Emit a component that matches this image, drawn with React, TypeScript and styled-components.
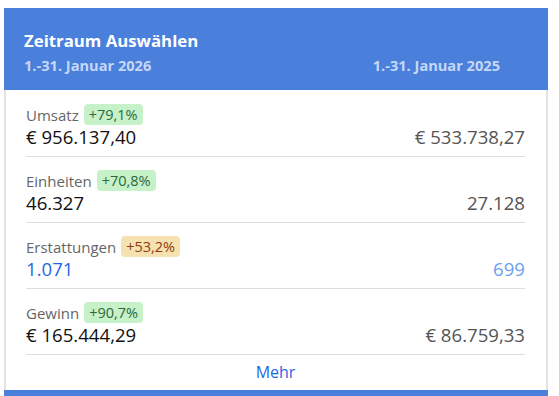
import React from "react";
import styled, { createGlobalStyle } from "styled-components";

const Global = createGlobalStyle`
  html, body { margin: 0; padding: 0; background: #ffffff; }
  body { font-family: "Open Sans", "Noto Sans", sans-serif; }
`;

const Card = styled.div`
  width: 544px;
  margin: 8px 0 0 4px;
  background: #fff;
`;

const Header = styled.div`
  background: #4a7fdc;
  height: 82px;
  box-sizing: border-box;
  padding: 21px 48px 0 20px;
`;

const Title = styled.div`
  color: #fff;
  font-weight: 700;
  font-size: 16.8px;
  line-height: 24px;
`;

const DateRow = styled.div`
  display: flex;
  justify-content: space-between;
  color: #c4d8f6;
  font-weight: 700;
  font-size: 14.6px;
  line-height: 20px;
  margin-top: 2px;
`;

const Body = styled.div`
  border-left: 2px solid #e2e2e2;
  border-right: 2px solid #e2e2e2;
  padding: 1px 21px 0 20px;
`;

const Row = styled.div`
  padding: 13px 0 7px;
  border-bottom: 1px solid #dedede;
`;

const LabelLine = styled.div`
  display: flex;
  align-items: center;
  gap: 5px;
  height: 21px;
`;

const Label = styled.span`
  color: #666;
  font-size: 15px;
`;

const Badge = styled.span<{ $tone: "up" | "warn" }>`
  display: inline-flex;
  align-items: center;
  height: 21px;
  padding: 0 5px;
  border-radius: 4px;
  font-size: 14.5px;
  background: ${(p) => (p.$tone === "up" ? "#c6f1c9" : "#f6e1b0")};
  color: ${(p) => (p.$tone === "up" ? "#2c6a3b" : "#8b3b0f")};
`;

const ValueLine = styled.div`
  display: flex;
  justify-content: space-between;
  font-size: 18.6px;
  line-height: 24px;
`;

const Current = styled.span<{ $blue?: boolean }>`
  color: ${(p) => (p.$blue ? "#1f68e3" : "#111")};
`;

const Previous = styled.span<{ $blue?: boolean }>`
  color: ${(p) => (p.$blue ? "#6b9ff0" : "#555")};
`;

const More = styled.div`
  text-align: center;
  padding: 7px 0 7px;
  font-size: 16px;
  line-height: 21px;
  color: #1f68e3;
`;

const BottomBar = styled.div`
  height: 10px;
  background: #4a7fdc;
`;

type Metric = {
  label: string;
  change: string;
  tone: "up" | "warn";
  current: string;
  previous: string;
  blue?: boolean;
};

const metrics: Metric[] = [
  { label: "Umsatz", change: "+79,1%", tone: "up", current: "€ 956.137,40", previous: "€ 533.738,27" },
  { label: "Einheiten", change: "+70,8%", tone: "up", current: "46.327", previous: "27.128" },
  { label: "Erstattungen", change: "+53,2%", tone: "warn", current: "1.071", previous: "699", blue: true },
  { label: "Gewinn", change: "+90,7%", tone: "up", current: "€ 165.444,29", previous: "€ 86.759,33" },
];

export default function App() {
  return (
    <>
      <Global />
      <Card>
        <Header>
          <Title>Zeitraum Auswählen</Title>
          <DateRow>
            <span>1.-31. Januar 2026</span>
            <span>1.-31. Januar 2025</span>
          </DateRow>
        </Header>
        <Body>
          {metrics.map((m) => (
            <Row key={m.label}>
              <LabelLine>
                <Label>{m.label}</Label>
                <Badge $tone={m.tone}>{m.change}</Badge>
              </LabelLine>
              <ValueLine>
                <Current $blue={m.blue}>{m.current}</Current>
                <Previous $blue={m.blue}>{m.previous}</Previous>
              </ValueLine>
            </Row>
          ))}
          <More>Mehr</More>
        </Body>
        <BottomBar />
      </Card>
    </>
  );
}
